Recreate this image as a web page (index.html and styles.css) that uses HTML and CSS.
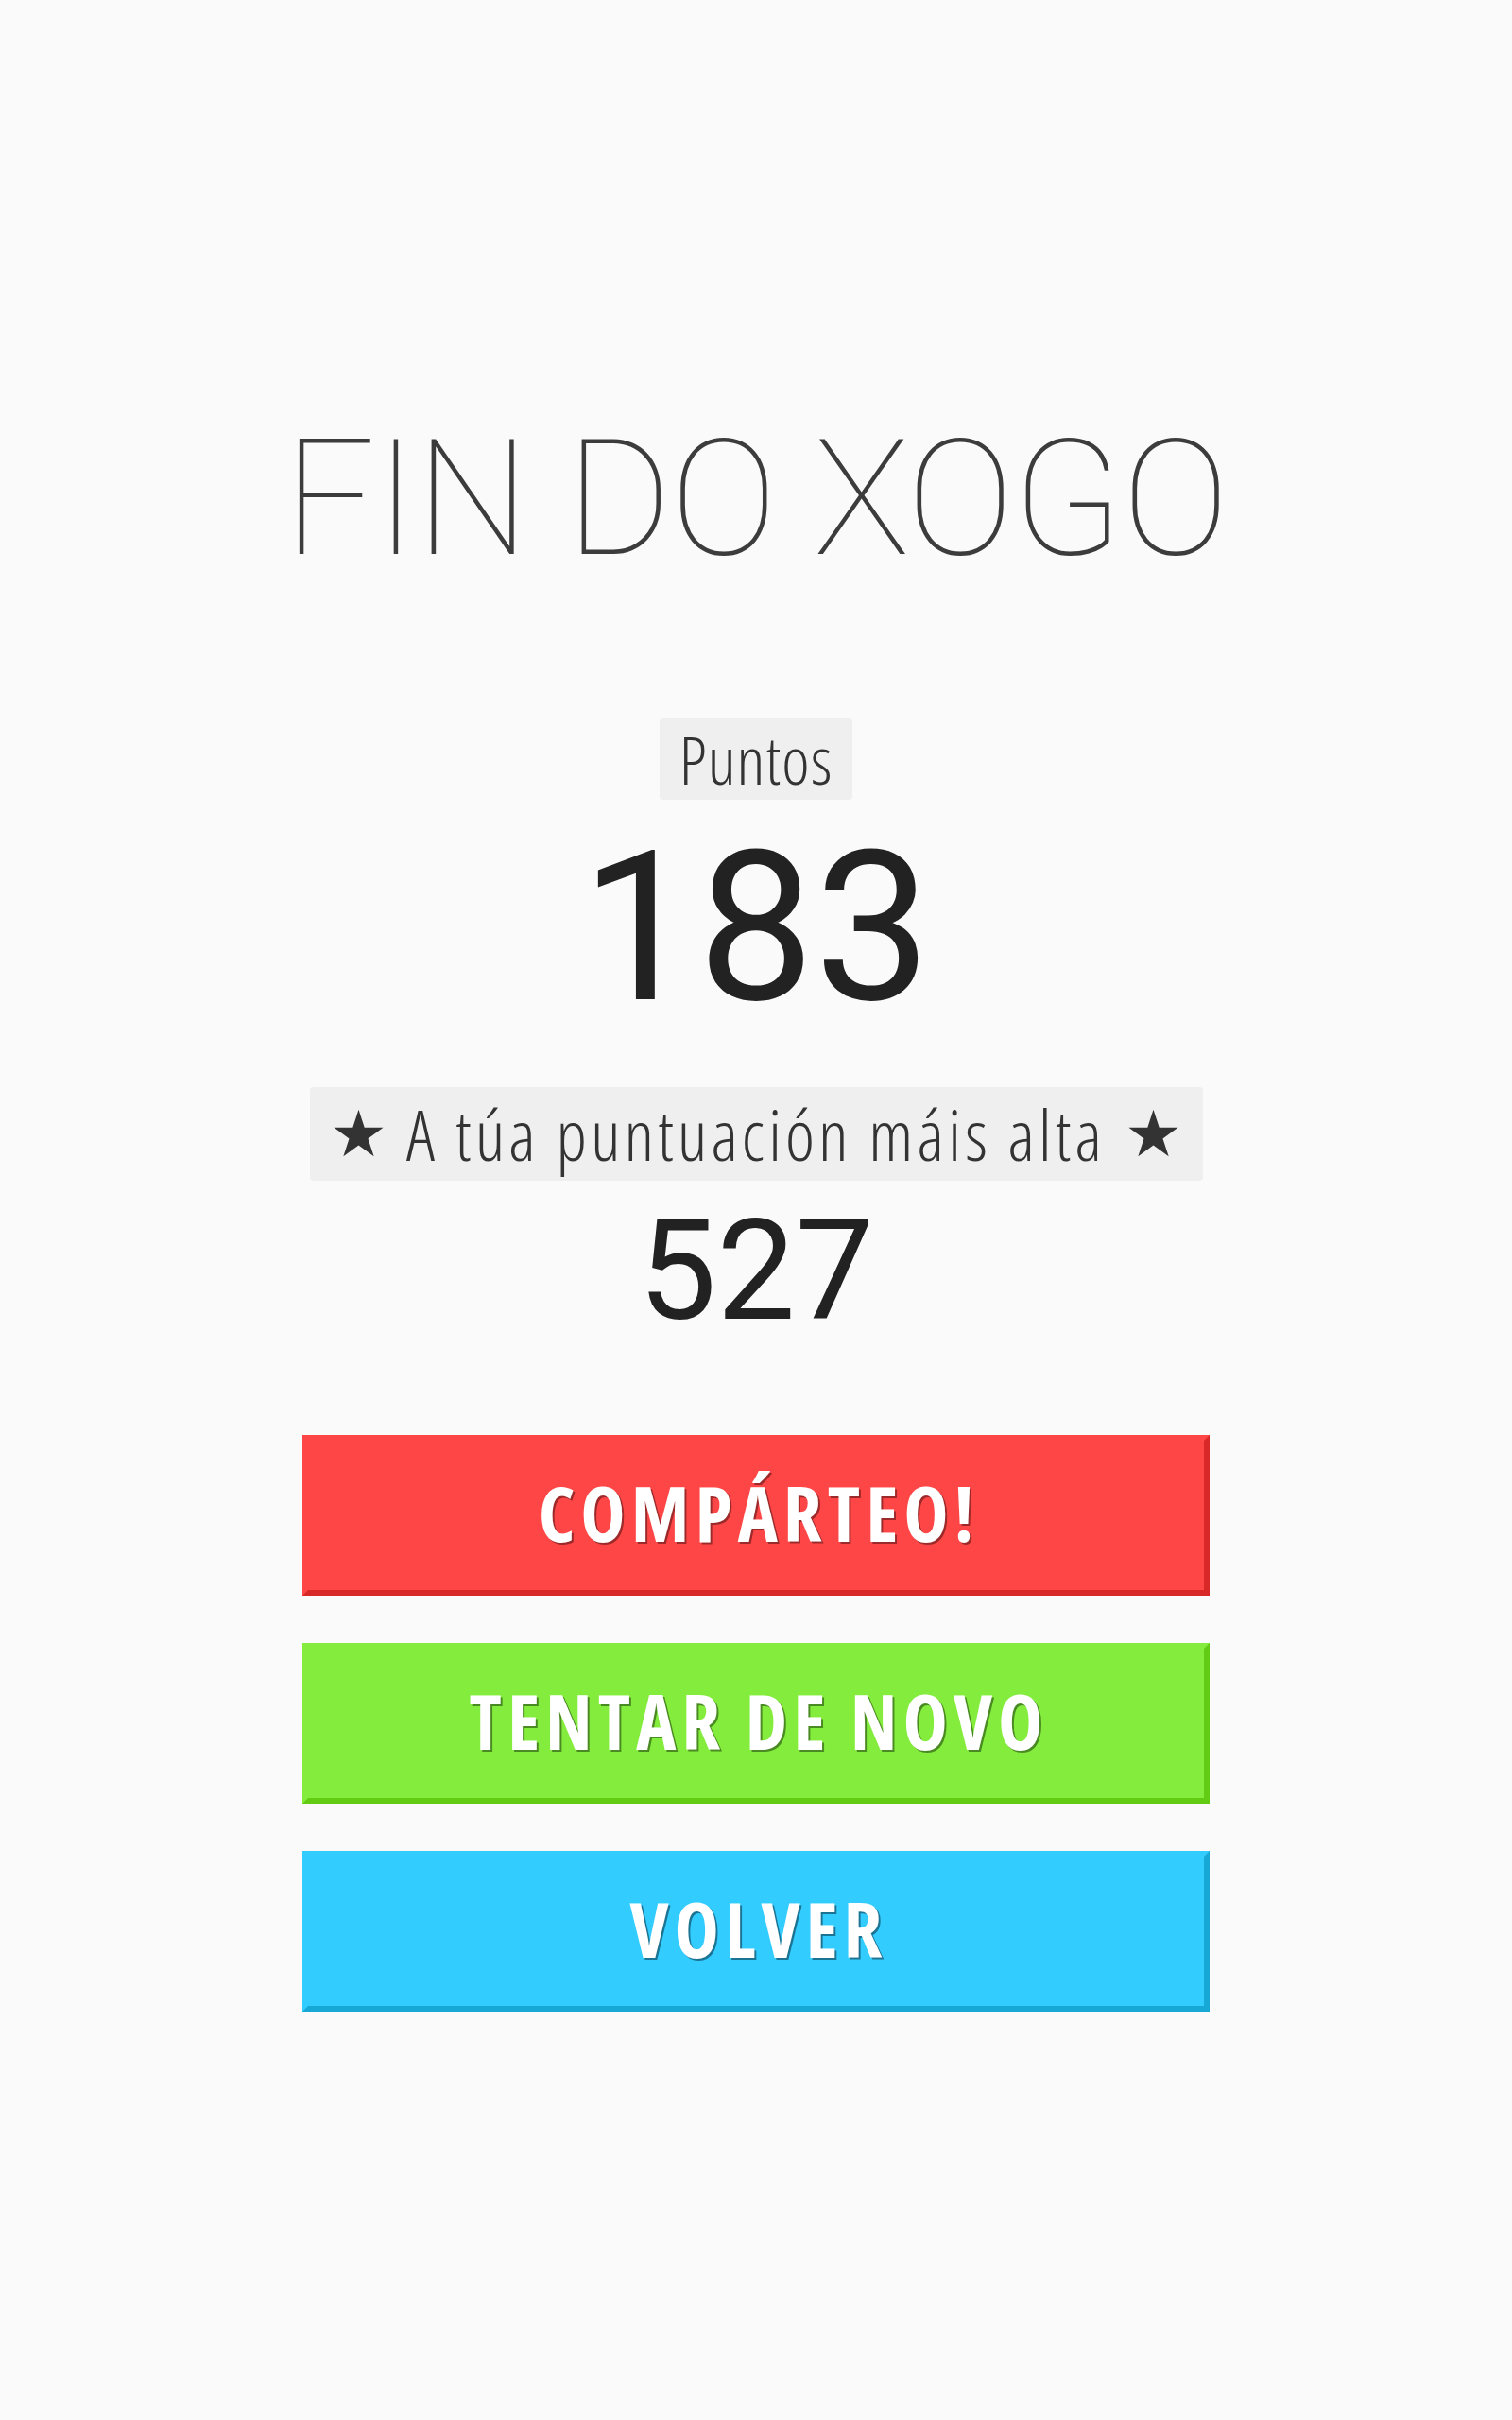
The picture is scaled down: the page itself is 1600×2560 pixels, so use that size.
FILE: index.html
```html
<!DOCTYPE html>
<html lang="gl">
<head>
<meta charset="utf-8">
<title>Fin do xogo</title>
<link rel="stylesheet" href="styles.css">
</head>
<body>
<main class="screen">
  <h1 class="title">FIN DO XOGO</h1>
  <div class="label label-score">Puntos</div>
  <div class="score">183</div>
  <div class="label label-best"><span class="star">★</span><span class="label-text">A túa puntuación máis alta</span><span class="star">★</span></div>
  <div class="best">527</div>
  <div class="buttons">
    <button class="btn btn-share">COMPÁRTEO!</button>
    <button class="btn btn-retry">TENTAR DE NOVO</button>
    <button class="btn btn-back">VOLVER</button>
  </div>
</main>
</body>
</html>
```
FILE: styles.css
```css
* { box-sizing: border-box; }
html, body { margin: 0; padding: 0; background: #fafafa; }
body { font-family: Roboto, "Liberation Sans", sans-serif; }

.screen {
  width: 960px;
  margin: 0 auto;
  padding-top: 443px;
  display: flex;
  flex-direction: column;
  align-items: center;
}

.title {
  margin: 0;
  font-family: Roboto, sans-serif;
  font-weight: 100;
  font-size: 170px;
  line-height: 1;
  color: #3c3c3c;
  letter-spacing: -1px;
  white-space: nowrap;
}

.label {
  margin-top: 147px;
  background: #efefef;
  border-radius: 4px;
  color: #333;
  font-family: "Open Sans", sans-serif;
  font-weight: 300;
  font-stretch: 75%;
  display: flex;
  align-items: center;
  justify-content: center;
  white-space: nowrap;
}

.label-score {
  height: 86px;
  width: 204px;
  font-size: 70px;
  letter-spacing: 1px;
}

.score {
  margin-top: 26px;
  font-family: Roboto, sans-serif;
  font-size: 220px;
  line-height: 1;
  color: #222;
}

.label-best {
  margin-top: 58px;
  width: 945px;
  height: 99px;
  gap: 20px;
  font-size: 74px;
}

.label-text {
  line-height: 1;
  letter-spacing: 4px;
}

.star {
  font-family: "DejaVu Sans", sans-serif;
  font-size: 68px;
  line-height: 1;
  font-stretch: normal;
}

.best {
  margin-top: 22px;
  font-family: Roboto, sans-serif;
  font-size: 148px;
  line-height: 1;
  color: #222;
}

.buttons {
  margin-top: 99px;
  width: 960px;
  display: flex;
  flex-direction: column;
  gap: 50px;
}

.btn {
  height: 170px;
  width: 100%;
  border: 6px solid;
  font-family: "Open Sans", sans-serif;
  font-weight: 700;
  font-stretch: 75%;
  font-size: 80px;
  letter-spacing: 6px;
  color: #fff;
  display: flex;
  align-items: center;
  justify-content: center;
  padding: 0 0 8px 6px;
  cursor: pointer;
}

.btn-share {
  background: #ff4646;
  border-color: #ff4646 #d92828 #d92828 #ff4646;
  text-shadow: 2px 2px 0 #9c2a2a;
}
.btn-retry {
  background: #84ec3c;
  border-color: #84ec3c #62cc14 #62cc14 #84ec3c;
  text-shadow: 2px 2px 0 #4a8a22;
}
.btn-back {
  background: #33ccff;
  border-color: #33ccff #17a8d6 #17a8d6 #33ccff;
  text-shadow: 2px 2px 0 #1c7494;
}
```
